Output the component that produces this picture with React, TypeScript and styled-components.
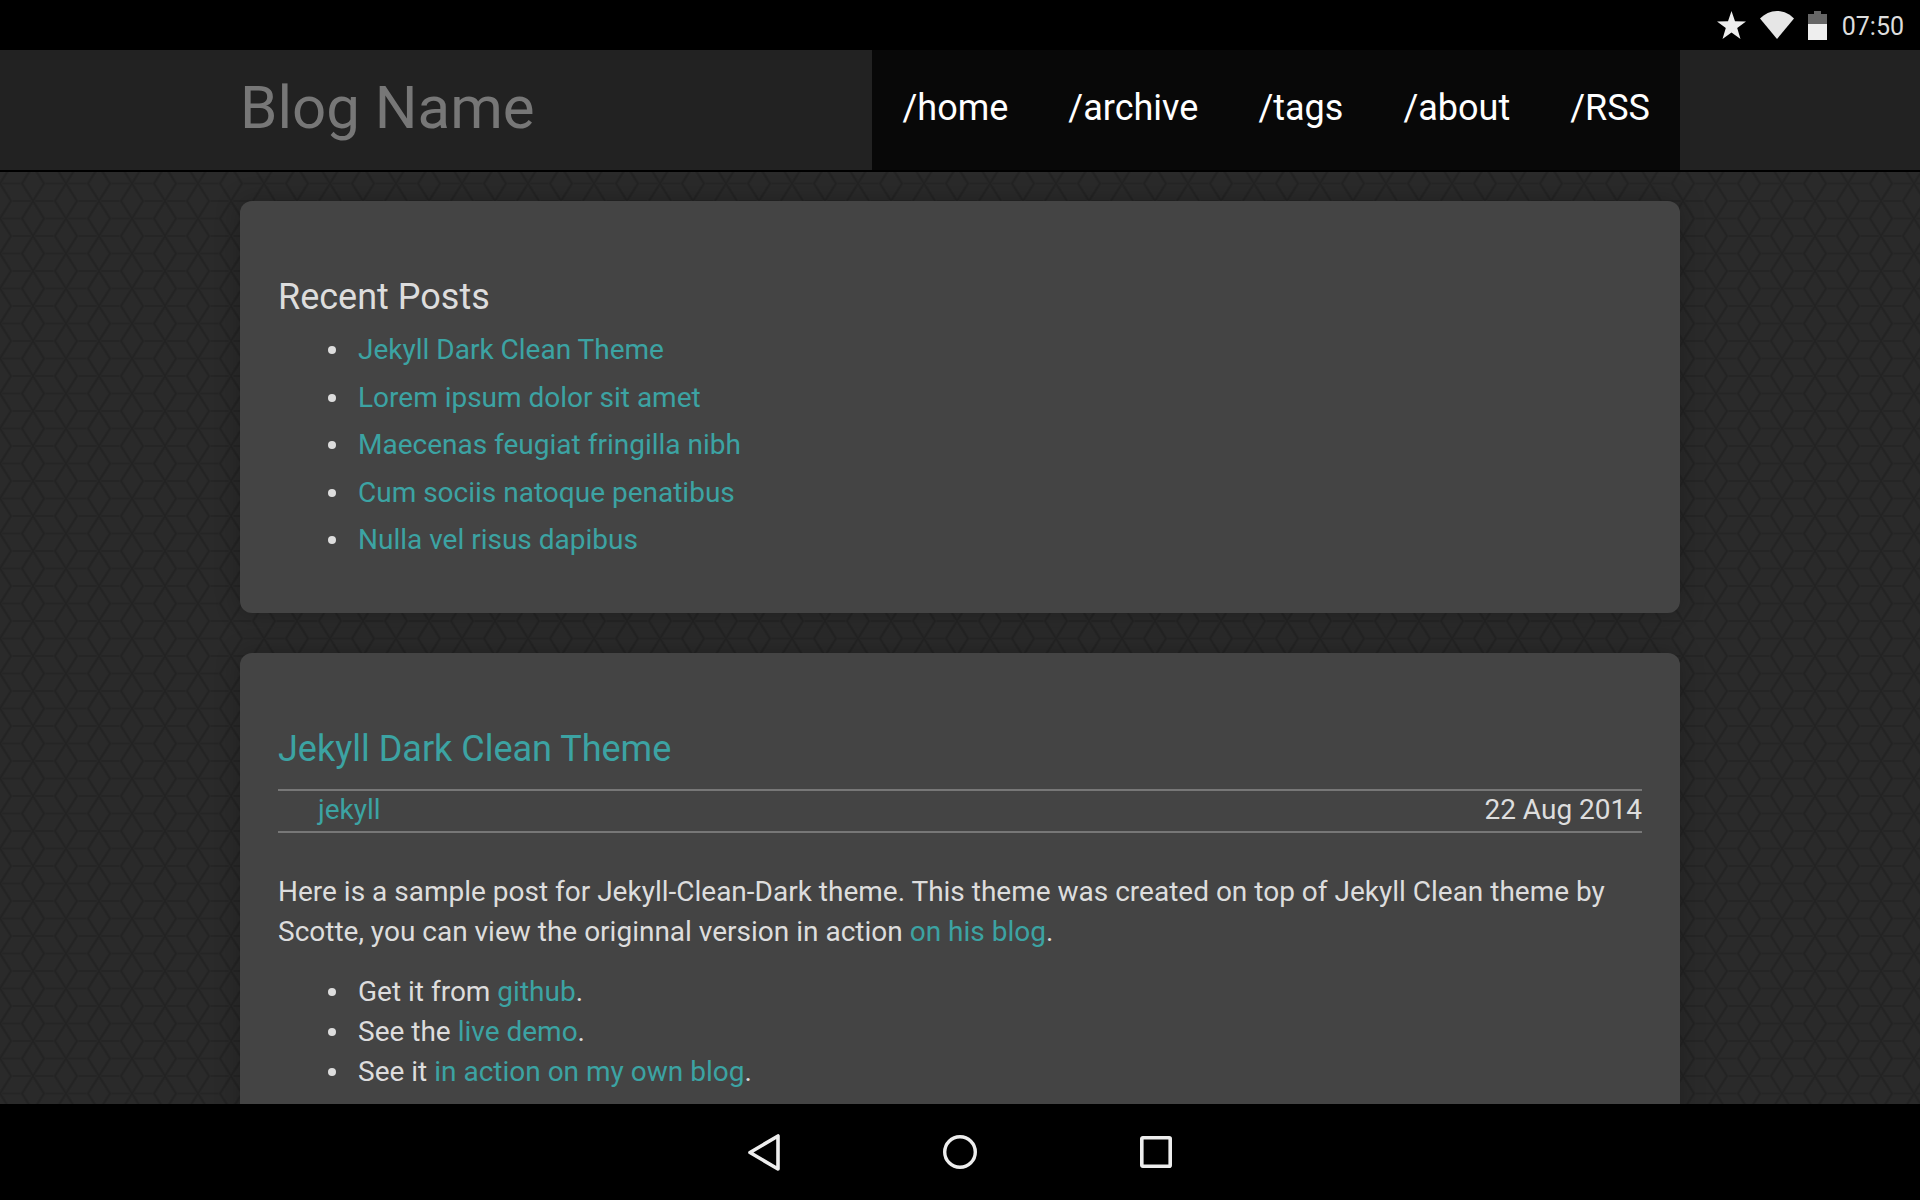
import React from "react";
import styled, { createGlobalStyle } from "styled-components";

const recentPosts = [
  "Jekyll Dark Clean Theme",
  "Lorem ipsum dolor sit amet",
  "Maecenas feugiat fringilla nibh",
  "Cum sociis natoque penatibus",
  "Nulla vel risus dapibus",
];

const navLinks = ["/home", "/archive", "/tags", "/about", "/RSS"];

// one tile of the tumbling blocks pattern behind the cards
const slantLines =
  "M33 0L44 17.5L33 35L22 17.5ZM66 -17.5L77 0L66 17.5L55 0ZM66 17.5L77 35L66 52.5L55 35ZM0 -17.5L11 0L0 17.5L-11 0ZM0 17.5L11 35L0 52.5L-11 35Z";
const flatLines = "M11 0H55M11 35H55M44 17.5H66M0 17.5H22";
const tileSvg = `<svg xmlns='http://www.w3.org/2000/svg' width='66' height='35'><path d='${flatLines}' fill='none' stroke='#252525' stroke-width='2'/><path d='${slantLines}' fill='none' stroke='#272727' stroke-width='3.4'/><path d='${slantLines}' fill='none' stroke='#232323' stroke-width='1.5'/></svg>`;
const tileUrl = `url("data:image/svg+xml,${encodeURIComponent(tileSvg)}")`;

const GlobalStyle = createGlobalStyle`
  html, body {
    margin: 0;
    padding: 0;
    background: #000;
  }
  * {
    box-sizing: border-box;
  }
`;

const App = () => {
  return (
    <>
      <GlobalStyle />
      <Screen>
        <StatusBar>
          <StatusIcon width="29" height="28" viewBox="0 0 29 28">
            <path d="M14.5 0L18 10.3L29 10.5L20.2 17.1L23.5 28L14.5 21.4L5.5 28L8.8 17.1L0 10.5L11 10.3Z" fill="#eee" />
          </StatusIcon>
          <StatusIcon width="34" height="28" viewBox="0 0 34 28">
            <path d="M17 28L0 7.5C4.5 3 10.5 0 17 0C23.5 0 29.5 3 34 7.5Z" fill="#e6e6e6" />
          </StatusIcon>
          <StatusIcon width="19" height="29" viewBox="0 0 19 29">
            <path d="M6 0H13V3H19V13H0V3H6Z" fill="#666" />
            <rect x="0" y="13" width="19" height="16" fill="#eee" />
          </StatusIcon>
          <Clock>07:50</Clock>
        </StatusBar>

        <Header>
          <BlogName>Blog Name</BlogName>
          <Nav>
            {navLinks.map((link) => (
              <NavLink key={link}>{link}</NavLink>
            ))}
          </Nav>
        </Header>

        <Main>
          <Card>
            <SectionTitle>Recent Posts</SectionTitle>
            <PostList>
              {recentPosts.map((post) => (
                <PostItem key={post}>
                  <Link>{post}</Link>
                </PostItem>
              ))}
            </PostList>
          </Card>

          <Card>
            <PostTitle>Jekyll Dark Clean Theme</PostTitle>
            <MetaRow>
              <Link>jekyll</Link>
              <span>22 Aug 2014</span>
            </MetaRow>
            <Paragraph>
              Here is a sample post for Jekyll-Clean-Dark theme. This theme was created on top of Jekyll Clean theme by
              Scotte, you can view the originnal version in action <Link>on his blog</Link>.
            </Paragraph>
            <BodyList>
              <BodyItem>
                Get it from <Link>github</Link>.
              </BodyItem>
              <BodyItem>
                See the <Link>live demo</Link>.
              </BodyItem>
              <BodyItem>
                See it <Link>in action on my own blog</Link>.
              </BodyItem>
            </BodyList>
          </Card>
        </Main>

        <BottomBar>
          <svg width="32" height="37" viewBox="0 0 32 37">
            <path d="M30 2V35L2 18.5Z" fill="none" stroke="#eee" strokeWidth="3.6" strokeLinejoin="round" />
          </svg>
          <svg width="34" height="34" viewBox="0 0 34 34">
            <circle cx="17" cy="17" r="15.3" fill="none" stroke="#eee" strokeWidth="3.4" />
          </svg>
          <svg width="32" height="32" viewBox="0 0 32 32">
            <rect x="1.8" y="1.8" width="28.4" height="28.4" rx="1" fill="none" stroke="#eee" strokeWidth="3.6" />
          </svg>
        </BottomBar>
      </Screen>
    </>
  );
};

export default App;

const Screen = styled.div`
  display: flex;
  flex-direction: column;
  width: 1920px;
  height: 1200px;
  overflow: hidden;
  font-family: Roboto, "Liberation Sans", sans-serif;
`;

const StatusBar = styled.div`
  display: flex;
  flex: none;
  align-items: center;
  justify-content: flex-end;
  height: 50px;
  padding-right: 16px;
  background: #000;
`;

const StatusIcon = styled.svg`
  flex: none;
  margin-right: 14px;
`;

const Clock = styled.span`
  margin-left: 1px;
  padding-top: 2px;
  font-size: 25px;
  color: #ddd;
`;

const Header = styled.header`
  display: flex;
  flex: none;
  justify-content: space-between;
  height: 122px;
  padding: 0 240px;
  background: #222;
  border-bottom: 2px solid #000;
`;

const BlogName = styled.div`
  font-size: 60px;
  line-height: 115px;
  color: #777;
`;

const Nav = styled.nav`
  display: flex;
  gap: 60px;
  height: 120px;
  padding: 0 30px;
  background: #080808;
`;

const NavLink = styled.a`
  font-size: 36px;
  line-height: 116px;
  color: #fff;
`;

const Main = styled.main`
  flex: 1;
  min-height: 0;
  overflow: hidden;
  padding: 29px 240px 0;
  background-color: #2a2a2a;
  background-image: ${tileUrl};
  background-position: 0 29px;
`;

const Card = styled.section`
  margin-bottom: 40px;
  padding: 73px 38px 49px;
  background: #444;
  border-radius: 12px;
  box-shadow: 0 0 24px rgba(0, 0, 0, 0.25);
  color: #ddd;
  font-size: 28px;
  line-height: 40px;
`;

const Link = styled.a`
  color: #3ca3a3;
`;

const SectionTitle = styled.h2`
  margin: 0 0 6px;
  font-size: 36px;
  font-weight: 400;
  line-height: 46px;
  color: #ddd;
`;

const PostList = styled.ul`
  margin: 0;
  padding: 0 0 0 80px;
  list-style: none;
`;

const PostItem = styled.li`
  position: relative;
  line-height: 47.5px;

  &::before {
    content: "";
    position: absolute;
    top: 20px;
    left: -30px;
    width: 8px;
    height: 8px;
    border-radius: 50%;
    background: #ddd;
  }
`;

const PostTitle = styled.h1`
  margin: 0;
  padding-bottom: 17px;
  font-size: 36px;
  font-weight: 400;
  line-height: 46px;
  color: #3ca3a3;
`;

const MetaRow = styled.div`
  display: flex;
  justify-content: space-between;
  height: 44px;
  padding-left: 40px;
  border-top: 2px solid #777;
  border-bottom: 2px solid #777;
  line-height: 38px;
`;

const Paragraph = styled.p`
  margin: 39px 0 20px;
`;

const BodyList = styled.ul`
  margin: 0;
  padding-left: 80px;
  list-style: none;
`;

const BodyItem = styled.li`
  position: relative;

  &::before {
    content: "";
    position: absolute;
    top: 16px;
    left: -30px;
    width: 8px;
    height: 8px;
    border-radius: 50%;
    background: #ddd;
  }
`;

const BottomBar = styled.div`
  display: flex;
  flex: none;
  align-items: center;
  justify-content: center;
  gap: 163px;
  height: 96px;
  background: #000;
`;
